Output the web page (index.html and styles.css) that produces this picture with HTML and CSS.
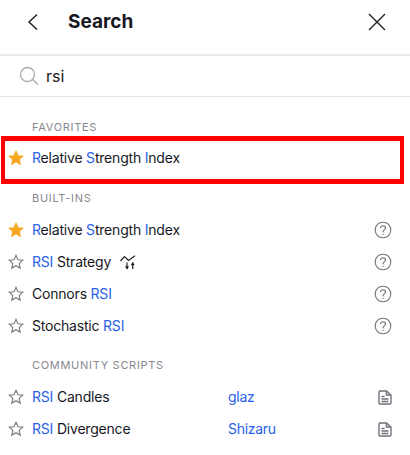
FILE: index.html
```html
<!DOCTYPE html>
<html lang="en">
<head>
<meta charset="utf-8">
<title>Search</title>
<link rel="stylesheet" href="styles.css">
</head>
<body>
<svg class="defs" width="0" height="0" aria-hidden="true">
  <defs>
    <symbol id="star" viewBox="0 0 16 16"><path d="M8 1.300l2 4.400 4.800.5-3.600 3.200 1 4.700L8 11.700l-4.200 2.400 1-4.700L1.200 6.200 6 5.700z"/></symbol>
    <symbol id="help" viewBox="0 0 18 18"><circle cx="9" cy="9" r="7.800"/><path d="M6.500 7.200c0-1.500 1.100-2.400 2.500-2.400s2.500.9 2.500 2.200c0 1-.6 1.500-1.300 2-.8.5-1.200 1-1.200 1.800v.4"/><path d="M9 12.800v1.200"/></symbol>
    <symbol id="doc" viewBox="0 0 14 15"><path d="M2 1h6.500L13 5v8a1 1 0 0 1-1 1H2a1 1 0 0 1-1-1V2a1 1 0 0 1 1-1z"/><path d="M8.500 1v4H13M3.500 6.500h3M3.500 9h7M3.500 11.500h7"/></symbol>
  </defs>
</svg>
<main class="panel">
  <header class="top">
    <svg class="back" width="12" height="18" viewBox="0 0 12 18"><path d="M10 1.500L2 9l8 7.500"/></svg>
    <h1 class="title">Search</h1>
    <svg class="close" width="18" height="18" viewBox="0 0 18 18"><path d="M1 1l16 16M17 1L1 17"/></svg>
  </header>
  <div class="search">
    <svg class="lens" width="20" height="20" viewBox="0 0 20 20"><circle cx="8.500" cy="8.500" r="7"/><path d="M13.500 13.500l5.500 5"/></svg>
    <span class="query">rsi</span>
  </div>

  <section class="group favorites">
    <h2 class="label">FAVORITES</h2>
    <div class="row"><svg class="star on"><use href="#star"/></svg><span class="name"><b>R</b>elative <b>S</b>trength <b>I</b>ndex</span></div>
    <div class="highlight"></div>
  </section>

  <section class="group builtins">
    <h2 class="label">BUILT-INS</h2>
    <div class="row"><svg class="star on"><use href="#star"/></svg><span class="name"><b>R</b>elative <b>S</b>trength <b>I</b>ndex</span><svg class="help"><use href="#help"/></svg></div>
    <div class="row"><svg class="star"><use href="#star"/></svg><span class="name"><b>RSI</b> Strategy</span>
      <svg class="strategy" width="16" height="15" viewBox="0 0 16 15"><path d="M.5 6L4.500 1.500l4 4L15 .8"/><path d="M7 7.500V14M12.700 14V7.500"/><path class="arrow" d="M5 11.200h4L7 14.500zM10.700 10.300h4l-2-3.300z"/></svg>
      <svg class="help"><use href="#help"/></svg></div>
    <div class="row"><svg class="star"><use href="#star"/></svg><span class="name">Connors <b>RSI</b></span><svg class="help"><use href="#help"/></svg></div>
    <div class="row"><svg class="star"><use href="#star"/></svg><span class="name">Stochastic <b>RSI</b></span><svg class="help"><use href="#help"/></svg></div>
  </section>

  <section class="group community">
    <h2 class="label">COMMUNITY SCRIPTS</h2>
    <div class="row script"><svg class="star"><use href="#star"/></svg><span class="name"><b>RSI</b> Candles</span><span class="author">glaz</span><svg class="doc"><use href="#doc"/></svg></div>
    <div class="row script"><svg class="star"><use href="#star"/></svg><span class="name"><b>RSI</b> Divergence</span><span class="author">Shizaru</span><svg class="doc"><use href="#doc"/></svg></div>
  </section>
</main>
</body>
</html>
```
FILE: styles.css
```css
* { box-sizing: border-box; }
html, body { margin: 0; padding: 0; }
body {
  width: 410px;
  height: 455px;
  overflow: hidden;
  background: #fff;
  color: #17181f;
  font-family: Inter, "Liberation Sans", sans-serif;
}
.defs { position: absolute; }
.panel { display: flex; flex-direction: column; }

.top {
  height: 56px;
  display: flex;
  align-items: center;
  padding: 0 24px 10px 27px;
  border-bottom: 2px solid #e9eaef;
}
.back { fill: none; stroke: #222; stroke-width: 1.500; }
.title { margin: 0 0 0 29px; flex: 1; font-size: 19px; font-weight: 700; line-height: 24px; }
.close { fill: none; stroke: #222; stroke-width: 1.400; }

.search {
  height: 41px;
  display: flex;
  align-items: center;
  gap: 7px;
  padding-left: 19px;
  border-bottom: 1px solid #e6e7ec;
}
.lens { fill: none; stroke: #a9abb1; stroke-width: 1.300; }
.query { font-size: 16px; line-height: 20px; }

.group { position: relative; }
.label {
  margin: 0;
  padding-left: 32px;
  font-size: 11px;
  font-weight: 400;
  line-height: 14px;
  letter-spacing: .7px;
  color: #868890;
}
.favorites { padding-top: 23px; }
.builtins { padding-top: 17px; }
.community { padding-top: 16px; }
.favorites .label { margin-bottom: 8px; }
.builtins .label { margin-bottom: 9px; }
.community .label { margin-bottom: 9px; }

.row {
  height: 32px;
  display: flex;
  align-items: center;
  padding: 0 18px 0 8px;
}
.name { font-size: 14px; line-height: 18px; letter-spacing: -.2px; }
.name b { font-weight: 400; color: #2962e8; }

.star { width: 16px; height: 16px; margin-right: 8px; flex: none; fill: none; stroke: #74767d; stroke-width: 1.100; }
.star.on { fill: #f9a825; stroke: #f9a825; }

.help { width: 18px; height: 18px; margin-left: auto; fill: none; stroke: #6f7178; stroke-width: 1.100; }
.strategy { margin-left: 9px; fill: none; stroke: #1f2026; stroke-width: 1.200; }
.strategy .arrow { fill: #1f2026; stroke: none; }

.script .name { width: 196px; }
.author { color: #2962e8; font-size: 14px; line-height: 18px; letter-spacing: -.3px; }
.doc { width: 14px; height: 15px; margin-left: auto; fill: none; stroke: #6f7178; stroke-width: 1.400; }

.highlight {
  position: absolute;
  left: 1px;
  top: 39px;
  width: 403px;
  height: 48px;
  border-style: solid;
  border-color: #f00;
  border-width: 5px 4px;
  pointer-events: none;
}
```
